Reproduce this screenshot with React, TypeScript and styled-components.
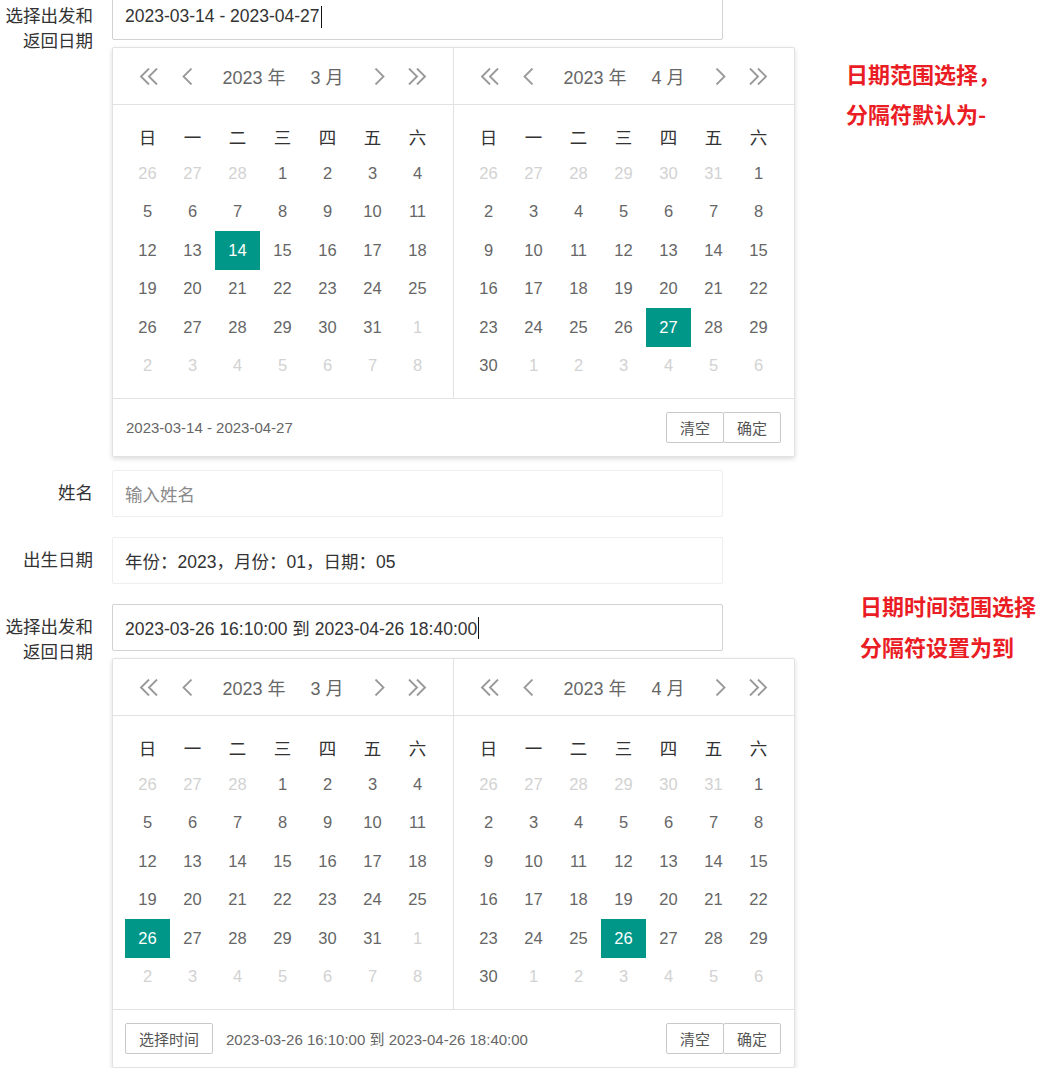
import React from 'react';
import styled, { createGlobalStyle } from 'styled-components';

const GlobalStyle = createGlobalStyle`
  html, body {
    margin: 0;
    padding: 0;
    background: #fff;
  }
  body {
    font-family: "Liberation Sans", "Noto Sans CJK SC", sans-serif;
    color: #333;
  }
`;

interface Cell {
    day: number;
    other: boolean;
}

interface MonthView {
    year: number;
    month: number;
    selected: number;
}

const WEEK = ['日', '一', '二', '三', '四', '五', '六'];

// 42 cells starting on Sunday, like laydate does
function buildMonth(year: number, month: number): Cell[] {
    const first = new Date(year, month - 1, 1).getDay();
    const daysIn = new Date(year, month, 0).getDate();
    const prevDays = new Date(year, month - 1, 0).getDate();
    const cells: Cell[] = [];
    for (let i = first - 1; i >= 0; i--) {
        cells.push({ day: prevDays - i, other: true });
    }
    for (let d = 1; d <= daysIn; d++) {
        cells.push({ day: d, other: false });
    }
    let next = 1;
    while (cells.length < 42) {
        cells.push({ day: next++, other: true });
    }
    return cells;
}

const Page = styled.div`
    width: 1055px;
    margin-top: -7px;
    display: flex;
    flex-direction: column;
`;

const Block = styled.div`
    display: flex;
    align-items: flex-start;
`;

const FormColumn = styled.div`
    display: flex;
    flex-direction: column;
`;

const FieldRow = styled.div<{ $after?: number; $before?: number }>`
    display: flex;
    align-items: flex-start;
    height: 47px;
    margin-top: ${p => p.$before ?? 0}px;
    margin-bottom: ${p => p.$after ?? 20}px;
`;

const Label = styled.label`
    width: 112px;
    flex: 0 0 112px;
    box-sizing: border-box;
    padding: 11px 19px 0 0;
    text-align: right;
    font-size: 17.5px;
    line-height: 25px;
    color: #333;
`;

const Field = styled.div<{ $active?: boolean; $placeholder?: boolean }>`
    width: 611px;
    height: 47px;
    box-sizing: border-box;
    border: 1px solid ${p => (p.$active ? '#d2d2d2' : '#eeeeee')};
    border-radius: 2px;
    padding-left: 12px;
    display: flex;
    align-items: center;
    font-size: 17.5px;
    color: ${p => (p.$placeholder ? '#8a8a8a' : '#333')};
    background: #fff;
`;

const Caret = styled.span`
    display: inline-block;
    width: 1px;
    height: 22px;
    margin-left: 1px;
    background: #111;
`;

const Note = styled.div<{ $top: number; $left: number; $line: number }>`
    margin-top: ${p => p.$top}px;
    margin-left: ${p => p.$left}px;
    font-family: "Noto Sans CJK SC", sans-serif;
    font-weight: 700;
    font-size: 22px;
    line-height: ${p => p.$line}px;
    color: #ea1c24;
    white-space: nowrap;
`;

const Popup = styled.div`
    margin: 7px 0 0 112px;
    width: 683px;
    box-sizing: border-box;
    border: 1px solid #e2e2e2;
    border-radius: 2px;
    background: #fff;
    box-shadow: 0 2px 5px rgba(0, 0, 0, 0.14);
    display: flex;
    flex-direction: column;
`;

const Panels = styled.div`
    display: flex;
`;

const Panel = styled.div<{ $divider?: boolean }>`
    width: 340px;
    border-left: ${p => (p.$divider ? '1px solid #e2e2e2' : 'none')};
`;

const Header = styled.div`
    height: 56px;
    border-bottom: 1px solid #e2e2e2;
    display: flex;
    align-items: center;
    padding: 0 26px;
`;

const NavGroup = styled.div`
    display: flex;
    gap: 18px;
`;

const NavIcon = styled.span`
    width: 20px;
    height: 18px;
    display: flex;
    align-items: center;
    justify-content: center;
    color: #999;
`;

const Title = styled.div`
    flex: 1;
    display: flex;
    justify-content: center;
    gap: 25px;
    font-size: 18px;
    color: #666;
`;

const Grid = styled.div`
    padding: 14px 12px 13px;
    display: grid;
    grid-template-columns: repeat(7, 45px);
    grid-template-rows: 35px repeat(6, 38.5px);
`;

const WeekCell = styled.div`
    display: flex;
    align-items: center;
    justify-content: center;
    font-size: 17.5px;
    color: #333;
`;

const DayCell = styled.div<{ $other?: boolean; $on?: boolean }>`
    display: flex;
    align-items: center;
    justify-content: center;
    font-size: 16.5px;
    color: ${p => (p.$on ? '#fff' : p.$other ? '#d2d2d2' : '#666')};
    background: ${p => (p.$on ? '#009688' : 'transparent')};
`;

const Footer = styled.div`
    height: 57px;
    border-top: 1px solid #e2e2e2;
    display: flex;
    align-items: center;
    padding: 0 13px 0 12px;
`;

const FooterText = styled.span<{ $indent: number }>`
    margin-left: ${p => p.$indent}px;
    font-size: 15px;
    color: #666;
    white-space: nowrap;
`;

const BtnGroup = styled.div`
    margin-left: auto;
    display: flex;
`;

const Btn = styled.span<{ $joined?: boolean }>`
    height: 31px;
    box-sizing: border-box;
    padding: 0 13px;
    margin-left: ${p => (p.$joined ? '-1px' : '0')};
    border: 1px solid #c9c9c9;
    border-radius: 2px;
    background: #fff;
    display: flex;
    align-items: center;
    font-size: 15px;
    color: #555;
    white-space: nowrap;
`;

const DoubleLeft = () => (
    <svg width="20" height="17" viewBox="0 0 20 17" fill="none" stroke="currentColor" strokeWidth="1.9">
        <polyline points="10,0.5 2,8.5 10,16.5" />
        <polyline points="18,0.5 10,8.5 18,16.5" />
    </svg>
);

const DoubleRight = () => (
    <svg width="20" height="17" viewBox="0 0 20 17" fill="none" stroke="currentColor" strokeWidth="1.9">
        <polyline points="2,0.5 10,8.5 2,16.5" />
        <polyline points="10,0.5 18,8.5 10,16.5" />
    </svg>
);

const Left = () => (
    <svg width="11" height="17" viewBox="0 0 11 17" fill="none" stroke="currentColor" strokeWidth="1.8">
        <polyline points="9.5,0.5 1.5,8.5 9.5,16.5" />
    </svg>
);

const Right = () => (
    <svg width="11" height="17" viewBox="0 0 11 17" fill="none" stroke="currentColor" strokeWidth="1.8">
        <polyline points="1.5,0.5 9.5,8.5 1.5,16.5" />
    </svg>
);

const CalendarPanel = ({ view, divider }: { view: MonthView; divider?: boolean }) => {
    const cells = buildMonth(view.year, view.month);
    return (
        <Panel $divider={divider}>
            <Header>
                <NavGroup>
                    <NavIcon><DoubleLeft /></NavIcon>
                    <NavIcon><Left /></NavIcon>
                </NavGroup>
                <Title>
                    <span>{view.year} 年</span>
                    <span>{view.month} 月</span>
                </Title>
                <NavGroup>
                    <NavIcon><Right /></NavIcon>
                    <NavIcon><DoubleRight /></NavIcon>
                </NavGroup>
            </Header>
            <Grid>
                {WEEK.map(w => <WeekCell key={w}>{w}</WeekCell>)}
                {cells.map((c, i) => (
                    <DayCell key={i} $other={c.other} $on={!c.other && c.day === view.selected}>
                        {c.day}
                    </DayCell>
                ))}
            </Grid>
        </Panel>
    );
};

const RangePicker = ({ start, end, text, withTime }: { start: MonthView; end: MonthView; text: string; withTime?: boolean }) => (
    <Popup>
        <Panels>
            <CalendarPanel view={start} />
            <CalendarPanel view={end} divider />
        </Panels>
        <Footer>
            {withTime && <Btn>选择时间</Btn>}
            <FooterText $indent={withTime ? 13 : 1}>{text}</FooterText>
            <BtnGroup>
                <Btn>清空</Btn>
                <Btn $joined>确定</Btn>
            </BtnGroup>
        </Footer>
    </Popup>
);

const TwoLineLabel = () => (
    <Label>选择出发和<br />返回日期</Label>
);

export default function App() {
    return (
        <>
            <GlobalStyle />
            <Page>
                <Block>
                    <FormColumn>
                        <FieldRow $after={0}>
                            <TwoLineLabel />
                            <Field $active>2023-03-14 - 2023-04-27<Caret /></Field>
                        </FieldRow>
                        <RangePicker
                            start={{ year: 2023, month: 3, selected: 14 }}
                            end={{ year: 2023, month: 4, selected: 27 }}
                            text="2023-03-14 - 2023-04-27"
                        />
                    </FormColumn>
                    <Note $top={60} $left={51} $line={40}>
                        日期范围选择，<br />分隔符默认为-
                    </Note>
                </Block>

                <FieldRow $before={13}>
                    <Label>姓名</Label>
                    <Field $placeholder>输入姓名</Field>
                </FieldRow>

                <FieldRow>
                    <Label>出生日期</Label>
                    <Field>年份：2023，月份：01，日期：05</Field>
                </FieldRow>

                <Block>
                    <FormColumn>
                        <FieldRow $after={0}>
                            <TwoLineLabel />
                            <Field $active>2023-03-26 16:10:00 到 2023-04-26 18:40:00<Caret /></Field>
                        </FieldRow>
                        <RangePicker
                            start={{ year: 2023, month: 3, selected: 26 }}
                            end={{ year: 2023, month: 4, selected: 26 }}
                            text="2023-03-26 16:10:00 到 2023-04-26 18:40:00"
                            withTime
                        />
                    </FormColumn>
                    <Note $top={-19} $left={65} $line={41}>
                        日期时间范围选择<br />分隔符设置为到
                    </Note>
                </Block>
            </Page>
        </>
    );
}
